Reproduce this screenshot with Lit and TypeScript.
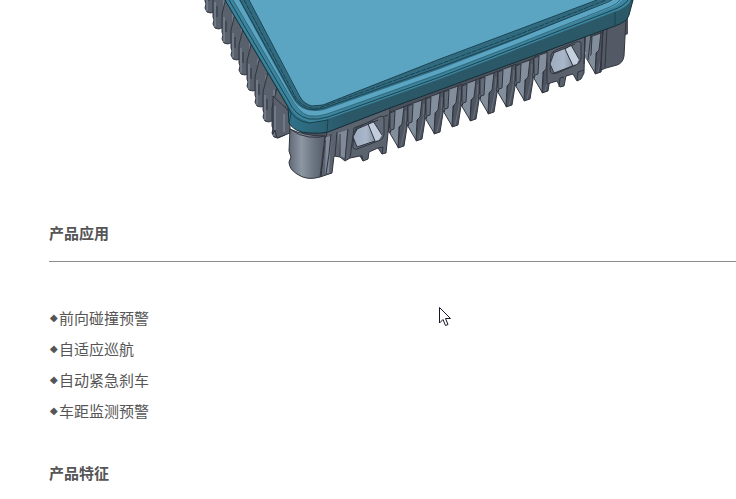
import { LitElement, css, html, svg } from "lit";
import { customElement } from "lit/decorators.js";

// Tips of the cooling fins, left flank from top to bottom.
const sideFins = [[210, 13], [218, 29], [227, 44], [236, 60], [244, 75], [252, 91], [260, 107], [268, 122], [277, 138]];
// Tips of the cooling fins along the front.
const frontFins = [[400, 148], [418, 141], [436, 134], [454, 127], [472, 121], [490, 114], [508, 107], [526, 101], [544, 93], [597, 74]];

@customElement("radar-housing")
class RadarHousing extends LitElement {
  static styles = css`
    :host { display: block; }
    svg { display: block; width: 440px; height: 184px; }
    .edge { fill: none; stroke: #1b4250; stroke-width: 1; }
    .soft { fill: none; stroke: #326779; stroke-width: 1; }
    .metal { stroke: #30353f; stroke-width: 1; stroke-linejoin: round; }
    .ink { fill: none; stroke: #30353f; stroke-width: 1; }
  `;

  private sideFin([x, y]: number[]) {
    return svg`
      <path class="metal" fill="#59616d" d="M${x - 5} ${y - 30}V${y - 12}l1 3l-1 4l2 4l4 1l7-3V${y - 18}l6 0V${y - 34}l-14-16z"/>
      <path d="M${x - 3} ${y - 27}V${y - 2}M${x + 6} ${y - 32}V${y - 4}" stroke="#8791a0" stroke-width="1"/>
      <path class="ink" d="M${x - 1} ${y - 23}V${y - 12}M${x + 8} ${y - 32}V${y - 3}"/>`;
  }

  private frontFin([x, y]: number[]) {
    return svg`
      <path class="metal" fill="#4e5560" d="M${x + 1} ${y - 40}l7-3l-1 22l-3 19l-6 2z"/>
      <path class="metal" fill="#828e9b" d="M${x - 10} ${y - 36}l14-5l-2 17l-3 3l-1 20l-10-17l2-3z"/>
      <path class="metal" fill="#626c79" d="M${x - 10} ${y - 35}l5-2l-1 18l-3 1l-1 3z"/>
      <path d="M${x + 6} ${y - 37}l-1 17l-4 18" fill="none" stroke="#68717e" stroke-width="1"/>`;
  }

  render() {
    return html`
      <svg viewBox="200 0 440 184" role="img" aria-label="产品外观">
        <defs>
          <linearGradient id="post"><stop offset="0" stop-color="#626975"/><stop offset=".35" stop-color="#8d97a4"/><stop offset=".7" stop-color="#6a7380"/><stop offset="1" stop-color="#555d68"/></linearGradient>
          <linearGradient id="rim"><stop offset="0" stop-color="#367f98"/><stop offset=".14" stop-color="#2f768e"/><stop offset=".3" stop-color="#2b5767"/><stop offset="1" stop-color="#2b5968"/></linearGradient>
          <linearGradient id="glass"><stop offset="0" stop-color="#9dabc0"/><stop offset=".6" stop-color="#aab7ca"/><stop offset="1" stop-color="#8793a3"/></linearGradient>
        </defs>

        <path fill="#59616d" d="M207 0H228L290 107V130L283 124L214 3z"/>
        ${sideFins.map((fin) => this.sideFin(fin))}
        <path class="metal" fill="#59616d" d="M273 96L290 112V133L277 138L275 130L273 134z"/>
        <path d="M275 106V130M284 114V132" stroke="#8791a0" stroke-width="1"/>
        <path fill="#4b525e" d="M300 132L388 108L628 15V34L597 48L410 114L390 132L310 140z"/>
        ${frontFins.map((fin) => this.frontFin(fin))}

        <path class="metal" fill="#5b636f" d="M327 132L390 108L388 133L386 153L382 154L378 148L369 152L368 159L363 161L360 156L350 158L345 161L340 157L334 156L332 173L320 177z"/>
        <path fill="#7f8997" d="M338 133l9-3l-2 28l-5-2zM326 137l5-1l-2 37l-4 1z"/>
        <path class="ink" d="M325 136L321 177M331 134L329 154L326 174M337 132L335 156M340 134V156M348 129L345 160M350 158L354 128L388 115M363 161L362 156L360 156M378 148L383 147L382 154"/>
        <path class="metal" fill="url(#post)" d="M290 129Q304 136 325 136L320 177Q307 181 297 174Q289 169 289 162L291 157L289 151z"/>
        <path class="ink" d="M290 129Q299 136 309 137Q319 138 325 136"/>
        <path class="metal" fill="#606976" d="M355 131Q355 128 359 127L379 117Q384 115 384 119V134Q384 139 378 141L357 149Q352 150 353 144z"/>
        <path fill="url(#glass)" d="M357 129L368 124L375 141L357 147L353 137z"/>
        <path fill="#c1cddd" d="M368 124L373 121L382 135L379 140L375 141z"/>
        <path class="ink" d="M357 129L353 137L357 147L375 141L368 124L373 121L382 135M355 132L357 129L378 120"/>

        <path class="metal" fill="#59616d" d="M547 51L585 35L584 73L581 79L577 81L573 74L566 76L564 86L560 87L557 81L547 84z"/>
        <path class="metal" fill="#535a66" d="M603 30L626 18L624 56Q623 63 617 65L606 68L601 70z"/>
        <path fill="#737d8a" d="M586 36L591 34L590 62L585 58z"/>
        <path class="ink" d="M585 35L584 64M591 34L588 60M603 30L600 72M607 28L605 67M559 87L560 78L564 77M577 80L578 72L584 70"/>
        <path class="metal" fill="#606976" d="M551 55Q552 52 556 50L576 42Q582 40 581 46V59Q580 63 576 65L557 73Q550 75 550 70z"/>
        <path fill="url(#glass)" d="M554 53L565 49L573 65L554 73L550 64z"/>
        <path fill="#c5d0df" d="M565 49L571 45L579 59L577 64L573 65z"/>
        <path class="ink" d="M554 53L550 64L554 73L573 66L565 49L571 45L579 59M553 53L575 44"/>

        <path fill="url(#rim)" stroke="#142f38" d="M225 0L288 107L289 123Q295 133 310 133Q320 134 328 132L390 108L615 26Q627 22 629 15L633 0z"/>
        <path fill="#3c859f" d="M226 0L288 104Q294 118 309 122Q318 123 328 119L440 79L520 48L614 12Q627 8 631 0z"/>
        <path fill="#5ba5c3" d="M233 0L286 90Q296 112 307 115Q315 117 325 115L440 73L520 43L610 8Q618 5 622 0z"/>
        <path class="edge" d="M229 0L288 100Q295 116 309 119Q318 120 328 117L440 77L520 46L613 10Q624 6 628 0"/>
        <path class="soft" d="M233 0L288 93Q298 113 309 116Q318 117 327 114L440 74L520 43L610 7Q617 4 620 0"/>
        <path fill="#316d83" d="M239 0L291 95Q297 108 307 110Q315 112 324 110L440 69L520 38L611 0H597L520 29L440 59L325 104Q316 108 306 101L299 96L249 0z"/>
        <path class="edge" d="M240 0L293 96Q299 106 308 109Q316 111 324 108L440 67L520 37L608 2L612 0"/>
        <path class="edge" stroke-width="2" stroke-dasharray="5 1" d="M244 0L296 98Q302 106 311 108Q318 109 324 106L440 64L520 34L606 0"/>
        <path class="soft" stroke="#63a6bc" d="M246 0L298 97Q303 105 312 106L323 104L440 61L520 32L599 1"/>
        <path fill="#5ba5c3" d="M249 0L300 97Q304 104 312 106L323 105L440 59L520 29L597 0z"/>
        <path class="edge" d="M249 0L300 97Q304 104 312 106L323 105L440 59L520 29L597 0"/>
        <path class="edge" d="M288 107L291 114L289 123M328 119L327 132M615 12V26M288 107Q294 121 309 123L328 120"/>
      </svg>`;
  }
}

@customElement("app-root")
class AppRoot extends LitElement {
  static styles = css`
    :host {
      display: block;
      position: relative;
      overflow: hidden;
      min-height: 100vh;
      background: #fff;
      color: #555;
      font: 15px/31px "Noto Sans CJK SC", sans-serif;
    }
    radar-housing { margin-left: 200px; }
    .copy { padding: 33px 0 10px 49px; }
    h2 { margin: 0; font-size: 15px; line-height: 31px; font-weight: 700; }
    .ruled { padding-bottom: 13px; border-bottom: 1px solid #8c8c8c; }
    ul { list-style: none; margin: 40px 0 31px; padding: 0; }
    li { display: flex; }
    .mark { width: 10px; font-family: "DejaVu Sans", sans-serif; font-size: 10px; text-indent: 1px; }
    .pointer { position: absolute; left: 438px; top: 306px; width: 14px; height: 21px; }
  `;

  private uses = ["前向碰撞预警", "自适应巡航", "自动紧急刹车", "车距监测预警"];

  render() {
    return html`
      <radar-housing></radar-housing>
      <section class="copy">
        <h2 class="ruled">产品应用</h2>
        <ul>${this.uses.map((use) => html`<li><span class="mark">◆</span>${use}</li>`)}</ul>
        <h2>产品特征</h2>
      </section>
      <svg class="pointer" viewBox="0 0 14 21" aria-hidden="true">
        <path d="M1.5 1.5V17L5 13.5L7.5 19.5L10 18.5L7.5 12.5H12.5z" fill="#fff" stroke="#171725"/>
      </svg>`;
  }
}
